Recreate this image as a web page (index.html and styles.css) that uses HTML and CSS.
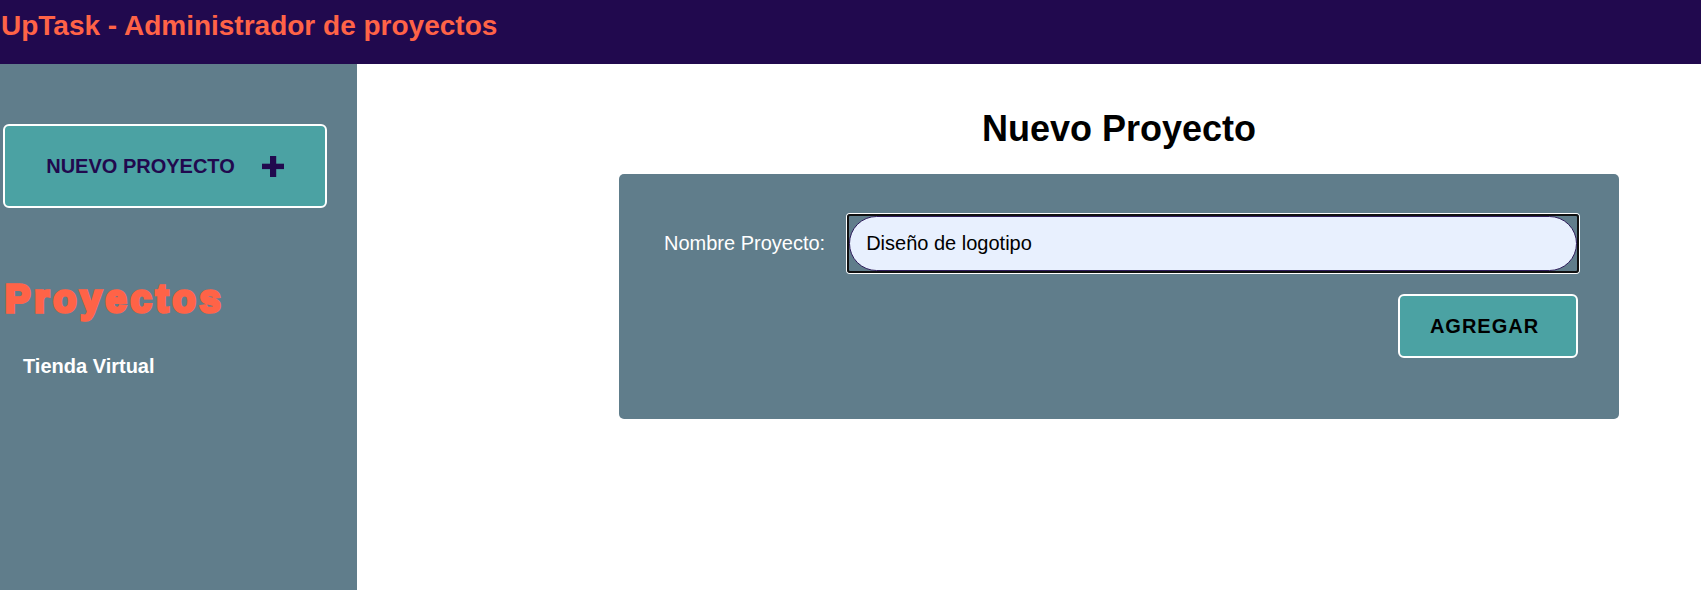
FILE: index.html
```html
<!DOCTYPE html>
<html lang="es">
<head>
<meta charset="utf-8">
<title>UpTask</title>
<link rel="stylesheet" href="styles.css">
</head>
<body>
<header class="topbar">
  <h1 class="brand">UpTask - Administrador de proyectos</h1>
</header>
<div class="layout">
  <aside class="sidebar">
    <button class="new-btn" type="button">
      <span class="new-btn__label">NUEVO PROYECTO</span>
      <svg class="new-btn__icon" width="22" height="21" viewBox="0 0 22 21" aria-hidden="true">
        <rect x="0" y="7.7" width="22" height="5.4" fill="#21094e"/>
        <rect x="8" y="0" width="6.2" height="21" fill="#21094e"/>
      </svg>
    </button>
    <h2 class="side-title">Proyectos</h2>
    <ul class="project-list">
      <li class="project-list__item">Tienda Virtual</li>
    </ul>
  </aside>
  <main class="content">
    <section class="panel">
      <h2 class="panel__title">Nuevo Proyecto</h2>
      <form class="card">
        <div class="field">
          <label class="field__label" for="nombre">Nombre Proyecto:</label>
          <div class="field__ring">
            <input class="field__input" id="nombre" type="text" value="Diseño de logotipo">
          </div>
        </div>
        <div class="actions">
          <button class="add-btn" type="button">AGREGAR</button>
        </div>
      </form>
    </section>
  </main>
</div>
</body>
</html>
```
FILE: styles.css
```css
* { box-sizing: border-box; }

html, body {
  margin: 0;
  padding: 0;
  height: 100%;
}

body {
  font-family: "Liberation Sans", Arial, sans-serif;
  background: #ffffff;
  color: #000;
}

.topbar {
  height: 64px;
  background: #21094e;
  padding: 10px 0 0 1px;
}

.brand {
  margin: 0;
  font-size: 28px;
  line-height: 32px;
  font-weight: 700;
  color: #ff6347;
}

.layout {
  display: flex;
  min-height: calc(100vh - 64px);
}

.sidebar {
  width: 357px;
  flex: none;
  background: #607d8b;
  padding: 60px 0 0 3px;
}

.new-btn {
  width: 324px;
  height: 84px;
  display: flex;
  align-items: center;
  justify-content: center;
  gap: 27px;
  background: #4ba2a3;
  border: 2px solid #ffffff;
  border-radius: 6px;
  font-family: "Liberation Sans", Arial, sans-serif;
  font-size: 20px;
  font-weight: 700;
  color: #21094e;
  padding: 0;
  cursor: pointer;
}

.new-btn__icon { display: block; flex: none; }

.side-title {
  margin: 69px 0 0 0;
  font-size: 38px;
  line-height: 44px;
  font-weight: 700;
  letter-spacing: 4px;
  color: #ff6347;
  -webkit-text-stroke: 3.4px #ff6347;
  padding-left: 2px;
}

.project-list {
  list-style: none;
  margin: 33px 0 0 0;
  padding: 0 0 0 20px;
}

.project-list__item {
  font-size: 20px;
  line-height: 24px;
  font-weight: 700;
  color: #ffffff;
}

.content {
  flex: 1;
  padding-left: 262px;
}

.panel {
  width: 1000px;
}

.panel__title {
  margin: 44px 0 24px;
  text-align: center;
  font-size: 36px;
  line-height: 42px;
  font-weight: 700;
}

.card {
  background: #607d8b;
  border-radius: 5px;
  padding: 40px 40px 61px 45px;
}

.field {
  display: flex;
  align-items: center;
  gap: 22px;
}

.field__label {
  font-size: 20px;
  color: #ffffff;
  white-space: nowrap;
}

.field__ring {
  flex: 1;
  border: 2px solid #111111;
  border-radius: 3px;
  box-shadow: 0 0 0 1px #ffffff;
}

.field__input {
  display: block;
  width: 100%;
  height: 55px;
  border: 1px solid #2f1d5c;
  border-radius: 28px;
  background: #e8f0fe;
  padding: 0 16px;
  font-family: "Liberation Sans", Arial, sans-serif;
  font-size: 20px;
  color: #000;
  outline: none;
}

.actions {
  display: flex;
  justify-content: flex-end;
  margin-top: 21px;
  padding-right: 1px;
}

.add-btn {
  width: 180px;
  height: 64px;
  background: #4ba2a3;
  border: 2px solid #ffffff;
  border-radius: 6px;
  font-family: "Liberation Sans", Arial, sans-serif;
  font-size: 20px;
  font-weight: 700;
  letter-spacing: 1px;
  color: #000;
  padding: 0 7px 0 0;
  cursor: pointer;
}
```
